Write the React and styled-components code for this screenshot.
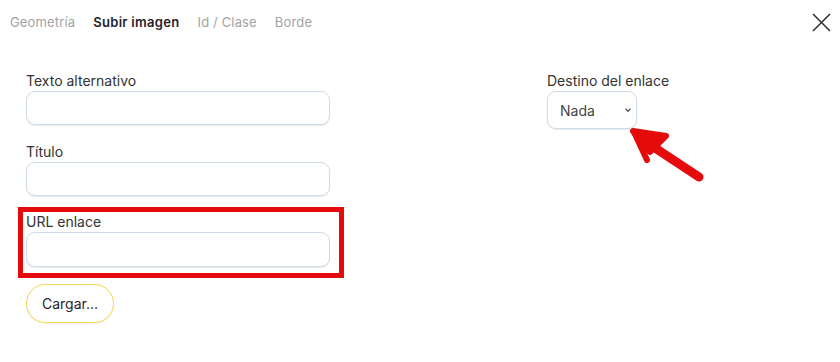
import React from "react";
import styled, { createGlobalStyle } from "styled-components";

const Global = createGlobalStyle`
  html, body { margin: 0; padding: 0; background: #fff; }
  body { font-family: Inter, "Noto Sans", sans-serif; color: #333; }
  * { box-sizing: border-box; }
`;

const Page = styled.div`
  position: relative;
  width: 840px;
  height: 362px;
  overflow: hidden;
`;

const Header = styled.div`
  display: flex;
  align-items: center;
  justify-content: space-between;
  height: 44px;
  padding: 0 9px 0 10px;
`;

const Tabs = styled.div`
  display: flex;
  gap: 18px;
  font-size: 13px;
`;

const Tab = styled.span`
  color: ${(p) => (p.$active ? "#1f2329" : "#a3a3a3")};
  font-weight: ${(p) => (p.$active ? 600 : 400)};
  letter-spacing: ${(p) => (p.$active ? "0.3px" : "0.15px")};
`;

const Close = styled.button`
  border: 0;
  background: none;
  padding: 0;
  width: 20px;
  height: 20px;
  display: flex;
  align-items: center;
  justify-content: center;
  color: #333;
`;

const Body = styled.div`
  display: flex;
  padding: 28px 0 0 26px;
`;

const LeftCol = styled.div`
  display: flex;
  flex-direction: column;
  width: 304px;
`;

const RightCol = styled.div`
  display: flex;
  flex-direction: column;
  margin-left: 217px;
`;

const Field = styled.div`
  position: relative;
  display: flex;
  flex-direction: column;
  gap: 2px;
  margin-bottom: ${(p) => p.$mb ?? 18}px;
`;

const Label = styled.label`
  font-size: 14px;
  line-height: 17px;
  color: #333;
`;

const Input = styled.div`
  height: ${(p) => p.$h || 34}px;
  width: 100%;
  border: 1px solid #cfdbe7;
  border-radius: 9px;
  background: #fff;
  box-shadow: 0 1px 1px rgba(120, 140, 170, 0.18);
`;

const Select = styled.div`
  display: flex;
  align-items: center;
  justify-content: space-between;
  width: 90px;
  height: 38px;
  padding: 0 3px 0 12px;
  border: 1px solid #cfdbe7;
  border-radius: 9px;
  box-shadow: 0 1px 1px rgba(120, 140, 170, 0.18);
  font-size: 14px;
  color: #444;
`;

const Highlight = styled.div`
  position: absolute;
  left: -8px;
  top: -6px;
  width: 326px;
  height: 71px;
  border: 5px solid #e60b0b;
  pointer-events: none;
`;

const Button = styled.button`
  align-self: flex-start;
  width: 88px;
  height: 39px;
  border: 1px solid #f8d64a;
  border-radius: 20px;
  background: #fff;
  box-shadow: 0 1px 2px rgba(0, 0, 0, 0.06);
  font-family: Inter, "Noto Sans", sans-serif;
  font-size: 14px;
  color: #1f2329;
  padding: 0;
`;

const Arrow = styled.svg`
  position: absolute;
  left: 0;
  top: 0;
  pointer-events: none;
`;

export default function App() {
  return (
    <Page>
      <Global />
      <Header>
        <Tabs>
          <Tab>Geometría</Tab>
          <Tab $active>Subir imagen</Tab>
          <Tab>Id / Clase</Tab>
          <Tab>Borde</Tab>
        </Tabs>
        <Close aria-label="Cerrar">
          <svg width="19" height="19" viewBox="0 0 19 19">
            <path d="M1 1 L18 18 M18 1 L1 18" stroke="#333" strokeWidth="1.6" fill="none" />
          </svg>
        </Close>
      </Header>
      <Body>
        <LeftCol>
          <Field>
            <Label>Texto alternativo</Label>
            <Input />
          </Field>
          <Field $mb={17}>
            <Label>Título</Label>
            <Input />
          </Field>
          <Field $mb={17}>
            <Label>URL enlace</Label>
            <Input $h={35} />
            <Highlight />
          </Field>
          <Button>Cargar...</Button>
        </LeftCol>
        <RightCol>
          <Field>
            <Label>Destino del enlace</Label>
            <Select>
              <span>Nada</span>
              <svg width="10" height="10" viewBox="0 0 10 10">
                <path d="M2.5 3.8 L5 6.3 L7.5 3.8" stroke="#555" strokeWidth="1.3" fill="none" />
              </svg>
            </Select>
          </Field>
        </RightCol>
      </Body>
      <Arrow width="840" height="362" viewBox="0 0 840 362">
        <path
          d="M633 131 L666 136 L657 145 L650 152 Z"
          fill="#e60b0b"
          stroke="#e60b0b"
          strokeWidth="6"
          strokeLinejoin="round"
        />
        <path
          d="M634 132 L647 160"
          stroke="#e60b0b"
          strokeWidth="6"
          strokeLinecap="round"
        />
        <path
          d="M640 138 L699 177"
          stroke="#e60b0b"
          strokeWidth="9"
          strokeLinecap="round"
        />
      </Arrow>
    </Page>
  );
}
